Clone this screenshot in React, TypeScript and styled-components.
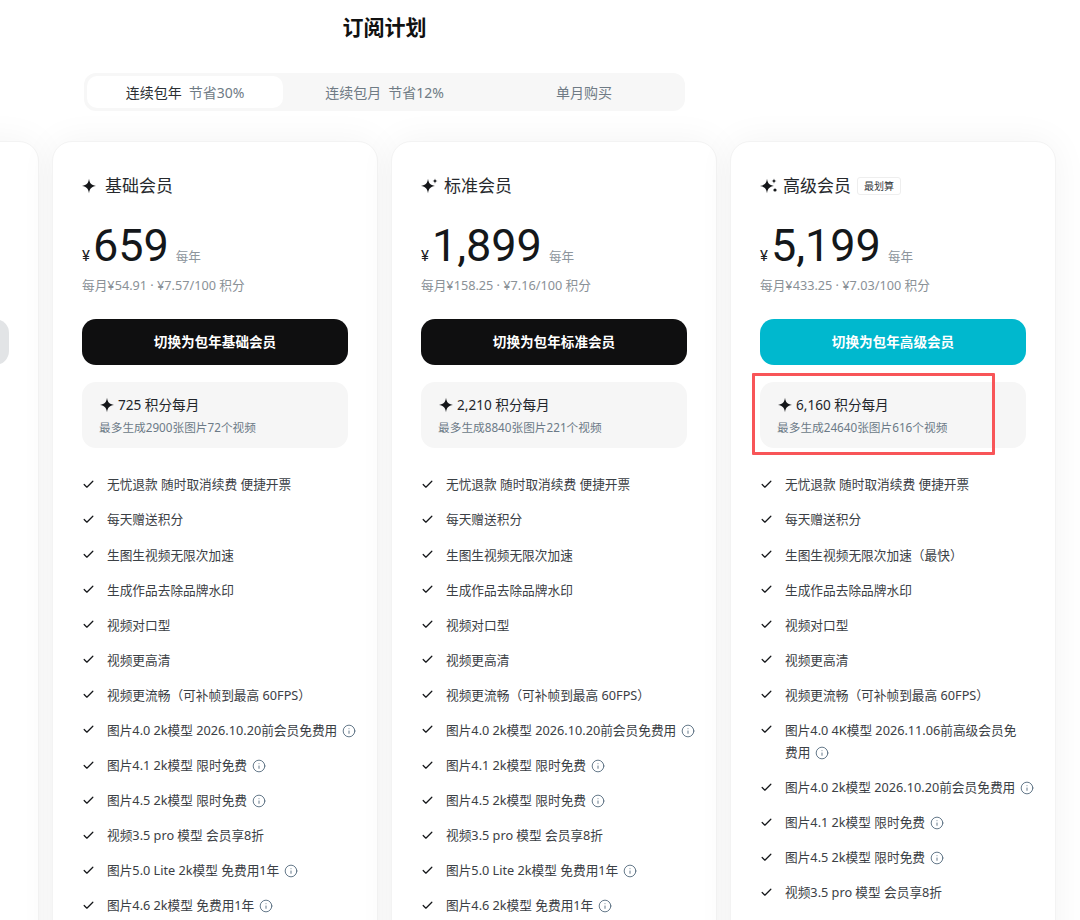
import React from "react";
import styled, { createGlobalStyle } from "styled-components";
import { Check, Info } from "lucide-react";

const Global = createGlobalStyle`
  html, body { margin: 0; padding: 0; background: #fff; }
  body {
    width: 1080px; height: 920px; overflow: hidden;
    font-family: "Noto Sans", "Noto Sans CJK SC", sans-serif;
    color: #17191c;
  }
`;

const Page = styled.div`
  width: 1080px;
  height: 920px;
  overflow: hidden;
  padding-top: 12px;
  box-sizing: border-box;
`;
const Header = styled.header`
  width: 601px;
  margin-left: 84px;
  display: flex;
  flex-direction: column;
`;
const Title = styled.h1`
  margin: 0;
  height: 30px;
  font-size: 21px;
  line-height: 30px;
  font-weight: 700;
  text-align: center;
  color: #111;
`;
const Tabs = styled.div`
  margin-top: 31px;
  height: 38px;
  box-sizing: border-box;
  padding: 3px;
  border-radius: 12px;
  background: #f7f7f7;
  display: grid;
  grid-template-columns: repeat(3, 1fr);
  column-gap: 3.5px;
`;
const Tab = styled.div<{ $active?: boolean }>`
  display: flex;
  align-items: center;
  justify-content: center;
  gap: 7px;
  border-radius: 10px;
  font-size: 14px;
  background: ${(p) => (p.$active ? "#fff" : "transparent")};
  color: ${(p) => (p.$active ? "#2b2f33" : "#6f7b85")};
`;
const Save = styled.span`
  color: #6f7b85;
`;
const Cards = styled.div`
  margin-top: 30px;
  margin-left: -287px;
  display: flex;
  gap: 13px;
  align-items: flex-start;
`;
const Card = styled.section`
  flex: 0 0 326px;
  box-sizing: border-box;
  height: 900px;
  padding: 32px 29px 0;
  border: 1px solid #f3f3f3;
  border-radius: 20px;
  background: #fff;
  box-shadow: 0 0 36px rgba(0, 0, 0, 0.05);
`;
const PlanRow = styled.div`
  height: 24px;
  display: flex;
  align-items: center;
`;
const PlanName = styled.span`
  margin-left: 5px;
  font-size: 17px;
  line-height: 24px;
  color: #26292d;
`;
const Badge = styled.span`
  margin-left: 6px;
  height: 18px;
  box-sizing: border-box;
  padding: 0 6px;
  border: 1px solid #eeeeee;
  border-radius: 3px;
  font-size: 10px;
  line-height: 16px;
  color: #33373b;
`;
const PriceRow = styled.div`
  margin-top: 21px;
  height: 54px;
  display: flex;
  align-items: baseline;
`;
const Yen = styled.span`
  font-family: "Roboto", sans-serif;
  font-size: 15px;
  color: #1d2024;
`;
const Amount = styled.span`
  font-family: "Roboto", sans-serif;
  margin-left: 3px;
  font-size: 45px;
  line-height: 54px;
  color: #14171a;
`;
const Per = styled.span`
  margin-left: 7px;
  font-size: 12.6px;
  color: #8d959c;
`;
const Rate = styled.div`
  margin-top: 2px;
  font-size: 12.7px;
  line-height: 20px;
  color: #8a9197;
`;
const Action = styled.button<{ $tone: "dark" | "teal" | "muted" }>`
  display: block;
  width: 266px;
  height: 46px;
  margin-top: 24px;
  border: 0;
  padding: 0 0 2px;
  border-radius: 14px;
  font-family: inherit;
  font-size: 13.6px;
  font-weight: 700;
  color: #fff;
  background: ${(p) =>
    p.$tone === "teal" ? "#00b8ce" : p.$tone === "muted" ? "#e2e4e6" : "#0f0f10"};
`;
const Credits = styled.div`
  position: relative;
  width: 266px;
  height: 66px;
  margin-top: 17px;
  box-sizing: border-box;
  padding: 13px 17px 0;
  border-radius: 14px;
  background: #f6f6f6;
`;
const CreditTop = styled.div`
  display: flex;
  align-items: center;
  gap: 0;
  height: 20px;
  padding-left: 1px;
  font-size: 13.6px;
  line-height: 20px;
  color: #22252a;
`;
const CreditSub = styled.div`
  margin-top: 3px;
  font-size: 11.7px;
  line-height: 18px;
  color: #6c7a87;
`;
const Highlight = styled.div`
  position: absolute;
  left: -8px;
  top: -9px;
  width: 243px;
  height: 82px;
  box-sizing: border-box;
  border: 3px solid #f85558;
  border-radius: 1px;
`;
const Features = styled.ul`
  list-style: none;
  margin: 25.4px 0 0;
  padding: 0;
  display: flex;
  flex-direction: column;
  gap: 13.08px;
`;
const Feature = styled.li`
  display: flex;
  gap: 12px;
  font-size: 12.7px;
  line-height: 22px;
  color: #3b4045;
`;
const Tick = styled.span`
  flex: 0 0 13px;
  height: 22px;
  display: flex;
  align-items: center;
  color: #15171a;
`;
const Label = styled.span`
  width: 241px;
`;
const InfoMark = styled.span`
  display: inline-block;
  width: 14px;
  height: 14px;
  margin: 0 -19px 0 5px;
  vertical-align: -3px;
  color: #4f6679;
  line-height: 0;
`;
const Spacer = styled.div`
  height: 121px;
`;

const Star = ({ level }: { level: number }) => (
  <svg width={18} height={16} viewBox="0 0 18 16" fill="#15171a" style={{ flex: "none" }}>
    <path d="M7 .8C7.8 5.6 9.2 7.1 14 8 9.2 8.9 7.8 10.4 7 15.2 6.2 10.4 4.8 8.9 0 8 4.8 7.1 6.2 5.6 7 .8Z" />
    {level >= 2 && <path d="M14 .5c.3 1.8.8 2.3 2.6 2.6-1.8.3-2.3.8-2.6 2.6-.3-1.8-.8-2.3-2.6-2.6 1.8-.3 2.3-.8 2.6-2.6Z" />}
    {level >= 3 && <circle cx="15" cy="12" r="1.6" />}
  </svg>
);

type Item = { text: string; info?: boolean };
const base: Item[] = [
  { text: "无忧退款 随时取消续费 便捷开票" },
  { text: "每天赠送积分" },
  { text: "生图生视频无限次加速" },
  { text: "生成作品去除品牌水印" },
  { text: "视频对口型" },
  { text: "视频更高清" },
  { text: "视频更流畅（可补帧到最高 60FPS）" },
];
const tail: Item[] = [
  { text: "图片4.0 2k模型 2026.10.20前会员免费用", info: true },
  { text: "图片4.1 2k模型 限时免费", info: true },
  { text: "图片4.5 2k模型 限时免费", info: true },
  { text: "视频3.5 pro 模型 会员享8折" },
  { text: "图片5.0 Lite 2k模型 免费用1年", info: true },
  { text: "图片4.6 2k模型 免费用1年", info: true },
];
const premium: Item[] = [
  { text: "无忧退款 随时取消续费 便捷开票" },
  { text: "每天赠送积分" },
  { text: "生图生视频无限次加速（最快）" },
  ...base.slice(3),
  { text: "图片4.0 4K模型 2026.11.06前高级会员免费用", info: true },
  ...tail.slice(0, 4),
];

const plans = [
  { name: "基础会员", level: 1, price: "659", rate: "每月¥54.91 · ¥7.57/100 积分", action: "切换为包年基础会员", tone: "dark" as const, credits: "725", sub: "最多生成2900张图片72个视频", items: [...base, ...tail] },
  { name: "标准会员", level: 2, price: "1,899", rate: "每月¥158.25 · ¥7.16/100 积分", action: "切换为包年标准会员", tone: "dark" as const, credits: "2,210", sub: "最多生成8840张图片221个视频", items: [...base, ...tail] },
  { name: "高级会员", level: 3, price: "5,199", rate: "每月¥433.25 · ¥7.03/100 积分", action: "切换为包年高级会员", tone: "teal" as const, credits: "6,160", sub: "最多生成24640张图片616个视频", items: premium, badge: "最划算", marked: true },
];

export default function App() {
  return (
    <Page>
      <Global />
      <Header>
        <Title>订阅计划</Title>
        <Tabs>
          <Tab $active>连续包年<Save>节省30%</Save></Tab>
          <Tab>连续包月<Save>节省12%</Save></Tab>
          <Tab>单月购买</Tab>
        </Tabs>
      </Header>
      <Cards>
        <Card>
          <Spacer />
          <Action $tone="muted" aria-label="当前计划" />
        </Card>
        {plans.map((p) => (
          <Card key={p.name}>
            <PlanRow>
              <Star level={p.level} />
              <PlanName>{p.name}</PlanName>
              {p.badge && <Badge>{p.badge}</Badge>}
            </PlanRow>
            <PriceRow>
              <Yen>¥</Yen>
              <Amount>{p.price}</Amount>
              <Per>每年</Per>
            </PriceRow>
            <Rate>{p.rate}</Rate>
            <Action $tone={p.tone}>{p.action}</Action>
            <Credits>
              <CreditTop>
                <Star level={1} />
                {p.credits} 积分每月
              </CreditTop>
              <CreditSub>{p.sub}</CreditSub>
              {p.marked && <Highlight />}
            </Credits>
            <Features>
              {p.items.map((it) => (
                <Feature key={it.text}>
                  <Tick><Check size={13} strokeWidth={2.3} /></Tick>
                  <Label>
                    {it.text}
                    {it.info && <InfoMark><Info size={14} strokeWidth={1.5} /></InfoMark>}
                  </Label>
                </Feature>
              ))}
            </Features>
          </Card>
        ))}
      </Cards>
    </Page>
  );
}
